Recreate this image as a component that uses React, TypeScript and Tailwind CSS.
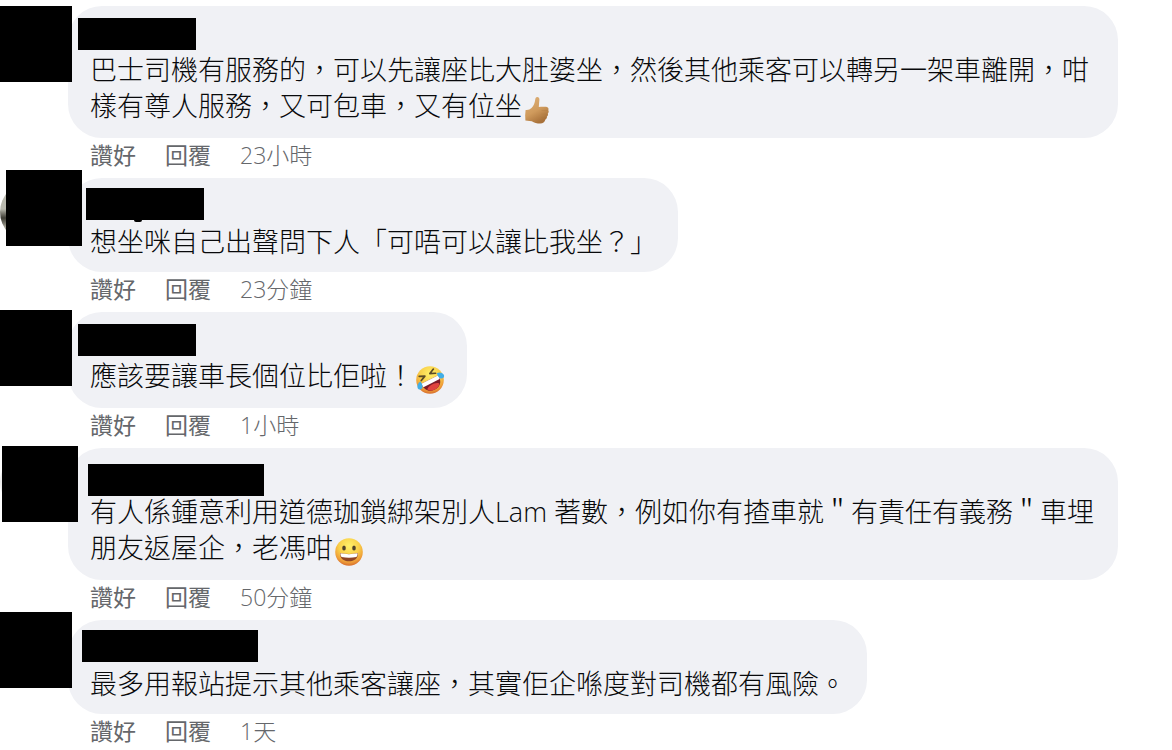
import type { ReactNode } from "react";

const emojiClass = "mx-px mb-px inline-block size-[30px] align-[-10px]";

function ThumbsUp() {
  return (
    <svg viewBox="0 0 30 30" className={emojiClass} role="img" aria-label="讚">
      <defs>
        <linearGradient id="skin" x1="0" y1="0" x2="0.5" y2="1">
          <stop offset="0" stopColor="#dfb27a" />
          <stop offset="0.6" stopColor="#cf9a5c" />
          <stop offset="1" stopColor="#a8713a" />
        </linearGradient>
      </defs>
      <path
        d="M13.200 2.400c1.700-.9 3.300.2 3.200 2.400-.1 2.500-.6 4.700-.6 7.100 2.500-.3 4.900-.3 7.300-.1 2.100.2 2.900 1.900 2.200 3.400.7 1.100.5 2.400-.5 3.200.5 1.200.1 2.500-.9 3.200.2 1.400-.4 2.500-1.500 3-.6 2.700-2.600 3.900-5 3.900-3.600 0-6.200-.8-8.600-2.300L2.400 25.400c-.4-3.400-.3-6.900.2-10.500 2.500.2 4.300-.2 5.900-1.800 2.300-2.400 3.300-5 3.700-8.300.1-1.200.3-2 1-2.400z"
        fill="url(#skin)"
      />
      <path
        d="M18.500 15.500h6.300M18.500 19h5.900M18 22.400h5.400"
        fill="none"
        stroke="#a9743c"
        strokeOpacity="0.3"
        strokeWidth="0.8"
      />
    </svg>
  );
}

function FaceGradient({ id }: { id: string }) {
  return (
    <radialGradient id={id} cx="0.5" cy="0.28" r="0.74">
      <stop offset="0" stopColor="#fff06a" />
      <stop offset="0.5" stopColor="#f9cf49" />
      <stop offset="0.8" stopColor="#ee9d38" />
      <stop offset="1" stopColor="#d4652b" />
    </radialGradient>
  );
}

function Rofl() {
  return (
    <svg viewBox="0 0 30 30" className={emojiClass} role="img" aria-label="笑到碌地">
      <defs>
        <FaceGradient id="rofl" />
      </defs>
      <circle cx="15" cy="15" r="13.800" fill="url(#rofl)" />
      <g transform="rotate(-27 15 15)">
        <path d="M5.500 14.500h19c.6 7.500-3.700 11.300-9.500 11.300S4.900 22 5.500 14.500z" fill="#7d1a28" />
        <path d="M8.200 22.300c3-3.200 10.600-3.200 13.600 0-1.600 2.300-3.900 3.500-6.800 3.500s-5.200-1.200-6.800-3.500z" fill="#e0433f" />
        <path d="M5.500 14.500h19c.1 1.500 0 2.800-.4 3.900H5.900c-.4-1.100-.5-2.400-.4-3.900z" fill="#fff" />
        <path
          d="M7 6.800l5.200 2.400-5.200 2.300M23 6.800l-5.200 2.400 5.200 2.300"
          fill="none"
          stroke="#5c4b26"
          strokeWidth="1.700"
          strokeLinecap="round"
          strokeLinejoin="round"
        />
        <path d="M5.800 12c-3 .3-5.100 2-5.400 4.400-.2 2.200 1.800 3.500 3.600 2.600 1.900-.9 2.300-4.200 1.800-7z" fill="#41aee6" />
        <path d="M24.200 12c3 .3 5.100 2 5.400 4.400.2 2.200-1.800 3.500-3.600 2.600-1.900-.9-2.300-4.200-1.800-7z" fill="#41aee6" />
      </g>
    </svg>
  );
}

function Grin() {
  return (
    <svg viewBox="0 0 30 30" className={emojiClass} role="img" aria-label="笑">
      <defs>
        <FaceGradient id="grin" />
      </defs>
      <circle cx="15" cy="15" r="13.800" fill="url(#grin)" />
      <ellipse cx="10" cy="11" rx="1.800" ry="2.500" fill="#51422a" />
      <ellipse cx="20" cy="11" rx="1.800" ry="2.500" fill="#51422a" />
      <path d="M6 16c6 1.200 12 1.200 18 0 .2 5.500-3.600 8.300-9 8.300S5.800 21.500 6 16z" fill="#8f4526" />
      <path d="M6.400 16.300c5.800 1.100 11.400 1.100 17.200 0 0 1.700-.4 2.900-1.200 3.800-5 1-9.800 1-14.800 0-.8-.9-1.200-2.100-1.200-3.800z" fill="#fff" />
    </svg>
  );
}

type Comment = {
  id: number;
  text: ReactNode;
  time: string;
  photo: string;
  avatarMask: string;
  nameMask: string;
  nameTail?: boolean;
};

const comments: Comment[] = [
  {
    id: 1,
    text: (
      <>
        巴士司機有服務的，可以先讓座比大肚婆坐，然後其他乘客可以轉另一架車離開，咁樣有尊人服務，又可包車，又有位坐
        <ThumbsUp />
      </>
    ),
    time: "23小時",
    photo: "hidden",
    avatarMask: "top-0 left-0 w-[72px]",
    nameMask: "top-3 left-[10px] w-[118px]",
  },
  {
    id: 2,
    text: "想坐咪自己出聲問下人「可唔可以讓比我坐？」",
    time: "23分鐘",
    photo: "bg-linear-to-b from-[#b9b9ae] from-45% via-[#3d3c34] via-60% to-[#a5a397] to-75%",
    avatarMask: "-top-2 left-[6px] w-[76px]",
    nameMask: "top-[10px] left-[18px] w-[118px]",
    nameTail: true,
  },
  {
    id: 3,
    text: (
      <>
        應該要讓車長個位比佢啦！
        <Rofl />
      </>
    ),
    time: "1小時",
    photo: "hidden",
    avatarMask: "-top-[2px] left-0 w-[72px]",
    nameMask: "top-3 left-[10px] w-[118px]",
  },
  {
    id: 4,
    text: (
      <>
        有人係鍾意利用道德珈鎖綁架別人Lam 著數，例如你有揸車就＂有責任有義務＂車埋朋友返屋企，老馮咁
        <Grin />
      </>
    ),
    time: "50分鐘",
    photo: "bg-[#ececec]",
    avatarMask: "-top-[2px] left-[2px] w-[76px]",
    nameMask: "top-4 left-[20px] w-[176px]",
  },
  {
    id: 5,
    text: "最多用報站提示其他乘客讓座，其實佢企喺度對司機都有風險。",
    time: "1天",
    photo: "hidden",
    avatarMask: "-top-2 left-0 w-[72px]",
    nameMask: "top-[10px] left-[14px] w-[176px]",
  },
];

function CommentItem({ comment }: { comment: Comment }) {
  return (
    <li className="relative pr-[54px] pl-[68px]">
      <div className={`absolute top-1 left-0 size-[60px] rounded-full ${comment.photo}`} />
      <article className="relative w-fit rounded-[34px] bg-[#f0f1f5] pt-[46px] pr-[21px] pb-3 pl-[22px]">
        <div className={`absolute h-8 bg-black ${comment.nameMask}`}>
          {comment.nameTail && (
            <span className="absolute top-8 left-12 h-[2px] w-2 rounded-b-full bg-black" />
          )}
        </div>
        <p className="text-[27px] leading-[36px] font-light text-[#08090b]">{comment.text}</p>
      </article>
      <div className={`absolute h-[76px] bg-black ${comment.avatarMask}`} />
      <div className="flex gap-[29px] pb-[6px] pl-[22px] text-[23px] leading-[34px] text-[#65676b]">
        <button type="button">讚好</button>
        <button type="button">回覆</button>
        <a href="#" className="font-light">
          {comment.time}
        </a>
      </div>
    </li>
  );
}

export default function App() {
  return (
    <main
      lang="zh-HK"
      className="bg-white pt-[6px] font-['Open_Sans','Noto_Sans_CJK_TC',sans-serif]"
    >
      <ul>
        {comments.map((comment) => (
          <CommentItem key={comment.id} comment={comment} />
        ))}
      </ul>
    </main>
  );
}
